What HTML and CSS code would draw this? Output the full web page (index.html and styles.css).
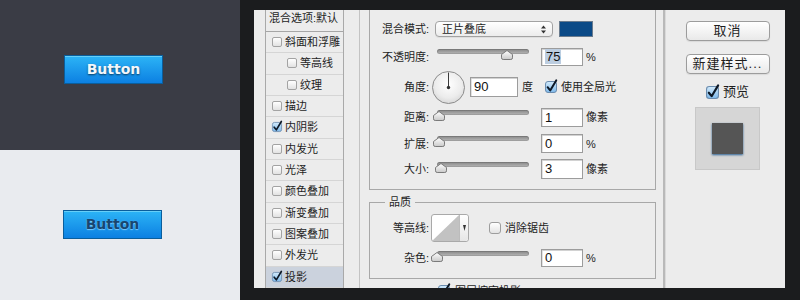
FILE: index.html
```html
<!DOCTYPE html>
<html lang="zh">
<head>
<meta charset="utf-8">
<title>图层样式</title>
<link rel="stylesheet" href="styles.css">
</head>
<body>
<svg class="defs" width="0" height="0" aria-hidden="true">
  <defs>
    <linearGradient id="gBlue" x1="0" y1="0" x2="0" y2="1">
      <stop offset="0" stop-color="#d3ebfc"/>
      <stop offset="1" stop-color="#7db8ea"/>
    </linearGradient>
    <linearGradient id="gThumb" x1="0" y1="0" x2="0" y2="1">
      <stop offset="0" stop-color="#ffffff"/>
      <stop offset="1" stop-color="#c9c9c9"/>
    </linearGradient>
    <radialGradient id="gDial" cx="0.5" cy="0.4" r="0.6">
      <stop offset="0" stop-color="#ffffff"/>
      <stop offset="0.7" stop-color="#ececec"/>
      <stop offset="1" stop-color="#d9d9d9"/>
    </radialGradient>
    <symbol id="cbOn" viewBox="0 0 12 12" overflow="visible">
      <rect x="0.5" y="0.5" width="11" height="11" rx="2.5" fill="url(#gBlue)" stroke="#6b8cae"/>
      <path d="M2.6 6.2 L5.2 9.4 L11.2 -0.6" fill="none" stroke="#0d1826" stroke-width="2" stroke-linecap="round" stroke-linejoin="round"/>
    </symbol>
    <symbol id="thumb" viewBox="0 0 12 10">
      <path d="M6 0.5 L11.5 4.5 V7.8 Q11.5 9.5 9.8 9.5 H2.2 Q0.5 9.5 0.5 7.8 V4.5 Z" fill="url(#gThumb)" stroke="#7a7a7a"/>
    </symbol>
  </defs>
</svg>
<div class="page">
  <div class="demo">
    <div class="demo-dark"><div class="btn btn-light-text">Button</div></div>
    <div class="demo-light"><div class="btn btn-dark-text">Button</div></div>
  </div>
  <div class="stage">
    <div class="dialog">
      <div class="styles-list">
        <div class="list-head">混合选项:默认</div>
        <div class="list-item"><span class="lcb"></span>斜面和浮雕</div>
        <div class="list-item sub"><span class="lcb"></span>等高线</div>
        <div class="list-item sub"><span class="lcb"></span>纹理</div>
        <div class="list-item"><span class="lcb"></span>描边</div>
        <div class="list-item"><svg class="lcb-on" width="10" height="10"><use href="#cbOn"/></svg>内阴影</div>
        <div class="list-item"><span class="lcb"></span>内发光</div>
        <div class="list-item"><span class="lcb"></span>光泽</div>
        <div class="list-item"><span class="lcb"></span>颜色叠加</div>
        <div class="list-item"><span class="lcb"></span>渐变叠加</div>
        <div class="list-item"><span class="lcb"></span>图案叠加</div>
        <div class="list-item"><span class="lcb"></span>外发光</div>
        <div class="list-item active"><svg class="lcb-on" width="10" height="10"><use href="#cbOn"/></svg>投影</div>
      </div>
      <div class="pane-gap"></div>
      <div class="pane-line"></div>
      <div class="pane-gap2"></div>
      <div class="main">
        <div class="group">
          <div class="row r1">
            <span class="lbl">混合模式:</span>
            <div class="select"><span>正片叠底</span>
              <svg width="5" height="9" viewBox="0 0 5 9"><path d="M0 3.5 L2.5 0.5 L5 3.5Z M0 5.5 L2.5 8.5 L5 5.5Z" fill="#333"/></svg>
            </div>
            <div class="swatch"></div>
          </div>
          <div class="row r2">
            <span class="lbl">不透明度:</span>
            <div class="slider"><div class="track"></div><svg class="thumb t-opacity" width="12" height="10"><use href="#thumb"/></svg></div>
            <div class="field f18"><span class="sel">75</span></div>
            <span class="unit">%</span>
          </div>
          <div class="row r3">
            <span class="lbl">角度:</span>
            <svg class="dial" width="33" height="33" viewBox="0 0 33 33">
              <circle cx="16.5" cy="16.5" r="16" fill="url(#gDial)" stroke="#8c8c8c"/>
              <line x1="16.5" y1="16.5" x2="16.5" y2="1.5" stroke="#3a3a3a" stroke-width="1"/>
              <circle cx="16.5" cy="16.5" r="1.7" fill="#333"/>
            </svg>
            <div class="field f20 wide">90</div>
            <span class="unit-deg">度</span>
            <svg class="cb-on global" width="12" height="12"><use href="#cbOn"/></svg>
            <span class="cb-text">使用全局光</span>
          </div>
          <div class="row r4">
            <span class="lbl">距离:</span>
            <div class="slider"><div class="track"></div><svg class="thumb t-min" width="12" height="10"><use href="#thumb"/></svg></div>
            <div class="field">1</div>
            <span class="unit px">像素</span>
          </div>
          <div class="row r5">
            <span class="lbl">扩展:</span>
            <div class="slider"><div class="track"></div><svg class="thumb t-min" width="12" height="10"><use href="#thumb"/></svg></div>
            <div class="field">0</div>
            <span class="unit">%</span>
          </div>
          <div class="row r6">
            <span class="lbl">大小:</span>
            <div class="slider"><div class="track"></div><svg class="thumb t-size" width="12" height="10"><use href="#thumb"/></svg></div>
            <div class="field f20">3</div>
            <span class="unit px">像素</span>
          </div>
        </div>
        <fieldset class="quality">
          <legend>品质</legend>
          <div class="row q1">
            <span class="lbl">等高线:</span>
            <div class="contour">
              <div class="contour-box"><svg width="27" height="26" viewBox="0 0 27 26"><path d="M0 26 L27 0 L27 26Z" fill="#c2c2c2"/></svg></div>
              <div class="contour-arrow"><svg width="3" height="6" viewBox="0 0 3 6"><path d="M0 0 H3 L1.5 6Z" fill="#333"/></svg></div>
            </div>
            <span class="cb aa"></span>
            <span class="cb-text">消除锯齿</span>
          </div>
          <div class="row q2">
            <span class="lbl">杂色:</span>
            <div class="slider"><div class="track"></div><svg class="thumb t-noise" width="12" height="10"><use href="#thumb"/></svg></div>
            <div class="field f18">0</div>
            <span class="unit">%</span>
          </div>
        </fieldset>
        <div class="knockout">
          <svg class="cb-on" width="12" height="12"><use href="#cbOn"/></svg>
          <span>图层挖空投影</span>
        </div>
      </div>
      <div class="side-line"></div>
      <div class="side">
        <div class="pbtn">取消</div>
        <div class="pbtn">新建样式...</div>
        <div class="preview-toggle">
          <svg class="cb-on" width="13" height="13"><use href="#cbOn"/></svg>
          <span>预览</span>
        </div>
        <div class="preview"><div class="preview-swatch"></div></div>
      </div>
    </div>
  </div>
</div>
</body>
</html>
```
FILE: styles.css
```css
* { box-sizing: border-box; margin: 0; padding: 0; }
html, body { width: 800px; height: 300px; overflow: hidden; }
body {
  font-family: "Liberation Sans", "Noto Sans CJK SC", sans-serif;
  color: #1c1c1c;
  background: #1b1c1e;
}
svg { overflow: visible; }
.defs { display: block; width: 0; height: 0; overflow: hidden; }

.page { display: flex; width: 800px; height: 300px; }

/* demo buttons */
.demo { width: 240px; flex: none; display: flex; flex-direction: column; }
.demo-dark { height: 150px; background: #3a3c45; padding: 55px 0 0 64px; }
.demo-light { height: 150px; background: #e9ebef; padding: 60px 0 0 63px; }
.btn {
  width: 99px; height: 29px;
  border: 1px solid #0a5e9c;
  background: linear-gradient(#2cb4f6, #0c80e2);
  box-shadow: inset 0 1px 0 #66cff8;
  font-family: "DejaVu Sans", "Noto Sans CJK SC", sans-serif;
  font-weight: bold; font-size: 14px; line-height: 27px;
  text-align: center;
}
.btn-light-text { color: #f3f7fb; text-shadow: 0 1px 2px rgba(0, 0, 0, 0.6); }
.btn-dark-text { color: #174670; text-shadow: 0 1px 1px rgba(150, 215, 255, 0.75), 0 0 2px rgba(120, 200, 255, 0.5); }

/* dialog */
.stage { width: 560px; height: 300px; flex: none; background: #1b1c1e; padding: 10px 15px 12px 14px; }
.dialog {
  height: 278px; background: #ececec;
  display: flex; overflow: hidden;
  font-size: 11px; line-height: 14px; color: #1e1e1e;
}

.styles-list {
  margin-left: 11px; width: 79px; flex: none;
  border-left: 1px solid #a9a9a9; border-right: 1px solid #a9a9a9;
  display: flex; flex-direction: column;
}
.list-head { height: 22px; flex: none; border-bottom: 1px solid #a6a6a6; padding: 1px 0 0 3px; }
.list-item {
  height: 21.33px; flex: none;
  border-bottom: 1px solid #d5d5d5;
  display: flex; align-items: center; gap: 3px;
  padding-left: 6px;
}
.list-item.sub { padding-left: 21px; }
.list-item.active { background: #cbd2dd; }
.lcb {
  width: 10px; height: 10px; flex: none;
  border: 1px solid #a3a3a3; border-radius: 2px;
  background: linear-gradient(#ffffff, #e2e2e2);
}
.lcb-on { flex: none; }

.pane-gap { width: 15px; flex: none; }
.pane-line { width: 1px; flex: none; background: #c3c3c3; }
.pane-gap2 { width: 9px; flex: none; }

.main { width: 287px; flex: none; display: flex; flex-direction: column; }
.group { border: 1px solid #a8a8a8; border-top: none; padding: 6px 0 7px 0; }
.row { display: flex; align-items: center; }
.r1 { height: 26px; }
.r2 { height: 29px; }
.r3 { height: 32px; }
.r4 { height: 28px; }
.r5 { height: 25px; }
.r6 { height: 26px; }
.lbl { width: 59px; flex: none; text-align: right; }

.select {
  margin-left: 6px; width: 118px; height: 16px; flex: none;
  border: 1px solid #a2a2a2; border-radius: 4px;
  background: linear-gradient(#ffffff, #ececec);
  box-shadow: 0 1px 0 rgba(0, 0, 0, 0.06);
  display: flex; align-items: center; justify-content: space-between;
  padding: 0 6px 0 6px;
}
.swatch { margin-left: 6px; width: 34px; height: 16px; flex: none; background: #0b4a87; border: 1px solid #6a7b8d; }

.slider { position: relative; margin-left: 8px; width: 92px; height: 10px; margin-bottom: 5px; flex: none; }
.track {
  position: absolute; left: 0; top: 0; width: 92px; height: 5px;
  border-radius: 3px;
  background: linear-gradient(#858585, #b9b9b9);
  box-shadow: inset 0 0 0 1px rgba(0, 0, 0, 0.12);
}
.thumb { position: absolute; top: 1px; }
.t-opacity { left: 64px; }
.t-min { left: -4px; }
.t-size { left: -2px; }
.t-noise { left: -6px; }

.field {
  margin-left: 12px; width: 42px; height: 19px; flex: none;
  border: 1px solid #9c9c9c; background: #ffffff;
  box-shadow: inset 0 1px 0 #d2d2d2, inset 1px 0 0 #e2e2e2;
  font-family: "Liberation Sans", sans-serif; font-size: 13px; line-height: 17px;
  padding-left: 3px; color: #111;
}
.field.f18 { height: 18px; line-height: 16px; }
.field.f20 { height: 20px; line-height: 18px; }
.field.wide { margin-left: 5px; width: 48px; }
.sel { background: #bccde0; padding: 0 1px; }
.unit { margin-left: 3px; }
.unit.px { margin-left: 3px; }

.dial { margin-left: 3px; flex: none; }
.unit-deg { margin-left: 4px; }
.cb-on { flex: none; }
.global { margin-left: 12px; }
.cb-text { margin-left: 4px; }
.cb {
  width: 12px; height: 12px; flex: none;
  border: 1px solid #9d9d9d; border-radius: 3px;
  background: linear-gradient(#ffffff, #e3e3e3);
}
.aa { margin-left: 20px; }

.quality { margin-top: 5px; border: 1px solid #a8a8a8; padding: 0 0 9px 0; min-width: 0; }
.quality legend { margin-left: 15px; padding: 0 4px; font-size: 11px; line-height: 14px; }
.q1 { height: 38px; }
.q2 { height: 22px; }
.contour {
  margin-left: 2px; height: 28px; flex: none;
  display: flex;
  border: 1px solid #a9a9a9; border-radius: 3px;
  background: #ffffff;
}
.contour-box { width: 28px; border-right: 1px solid #bcbcbc; }
.contour-arrow {
  width: 8px; display: flex; align-items: center; justify-content: center;
  background: linear-gradient(#ffffff, #e6e6e6);
  border-radius: 0 3px 3px 0;
}

.knockout { margin-top: 5px; padding-left: 69px; height: 14px; display: flex; align-items: center; gap: 5px; }

.side-line { margin-left: 7px; width: 2px; flex: none; background: #b9b9b9; box-shadow: 1px 0 0 #dadada; }
.side { width: 120px; flex: none; display: flex; flex-direction: column; align-items: center; padding: 11px 0 0 5px; }
.pbtn {
  width: 84px; height: 20px; flex: none;
  border: 1px solid #9c9c9c; border-radius: 4px;
  background: linear-gradient(#ffffff, #e9e9e9);
  box-shadow: 0 1px 1px rgba(0, 0, 0, 0.08);
  font-size: 13px; line-height: 18px; text-align: center; letter-spacing: 1px;
}
.pbtn + .pbtn { margin-top: 13px; }
.preview-toggle { margin-top: 11px; height: 14px; display: flex; align-items: center; gap: 4px; font-size: 13px; }
.preview {
  margin-top: 8px; width: 65px; height: 63px; flex: none;
  background: #d6d6d6; border: 1px solid #c8c8c8;
  display: flex; align-items: center; justify-content: center;
}
.preview-swatch { width: 31px; height: 31px; background: #555555; box-shadow: 0 1px 2px rgba(11, 74, 135, 0.85); }
```
